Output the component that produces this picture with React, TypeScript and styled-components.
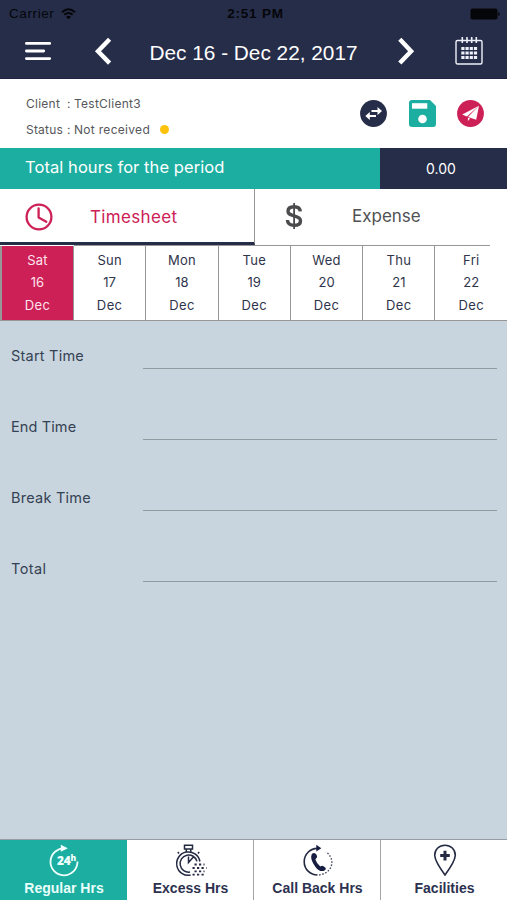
import React from "react";
import styled, { createGlobalStyle } from "styled-components";

const navy = "#262d49";
const teal = "#1caea0";
const crimson = "#cc2056";
const line = "#979797";

const GlobalStyle = createGlobalStyle`
  * { box-sizing: border-box; }
  body { margin: 0; background: #c9d5de; font-family: Inter, "Open Sans", sans-serif; }
  svg { display: block; flex: none; }
`;

const Screen = styled.div`
  width: 507px;
  height: 900px;
  display: flex;
  flex-direction: column;
  overflow: hidden;
  background: #c9d5de;
`;

const Text = styled.span<{ $size: number; $track?: number; $weight?: number; $color?: string; $sans?: boolean }>`
  font-family: ${(p) => (p.$sans ? '"Liberation Sans", sans-serif' : 'Inter, "Open Sans", sans-serif')};
  font-size: ${(p) => p.$size}px;
  letter-spacing: ${(p) => p.$track ?? 0}px;
  font-weight: ${(p) => p.$weight ?? 400};
  color: ${(p) => p.$color ?? "inherit"};
  white-space: pre;
`;

const Header = styled.header`
  height: 79px;
  background: ${navy};
  border-bottom: 1px solid #1e2442;
`;

const StatusBar = styled.div`
  height: 27px;
  display: grid;
  grid-template-columns: 1fr auto 1fr;
  align-items: center;
  padding: 0 5px 0 9px;
  color: #050609;
`;

const Carrier = styled.div`
  display: flex;
  align-items: center;
  gap: 7px;
`;

const Battery = styled.div`
  justify-self: end;
`;

const TitleBar = styled.div`
  height: 48px;
  display: grid;
  grid-template-columns: 76px 54px 247px 58px 68px;
  align-items: center;
  justify-items: center;
  color: #fff;
`;

const Title = styled.div`
  padding-top: 3px;
`;

const ClientPanel = styled.section`
  height: 69px;
  background: #fff;
  display: flex;
  justify-content: space-between;
  padding: 0 23px 0 26px;
  color: #56575c;
`;

const Details = styled.div`
  padding-top: 11px;
`;

const Detail = styled.div`
  display: grid;
  grid-template-columns: 41px 7px auto auto;
  justify-content: start;
  align-items: center;
  height: 26px;
`;

const Dot = styled.i`
  width: 9px;
  height: 9px;
  border-radius: 50%;
  background: #fdc20a;
  margin-left: 10px;
`;

const Actions = styled.div`
  display: flex;
  gap: 21.5px;
  padding-top: 21px;
`;

const TotalBar = styled.section`
  height: 41px;
  display: grid;
  grid-template-columns: 380px 1fr;
  color: #fff;
`;

const TotalLabel = styled.div`
  background: ${teal};
  padding: 0 0 4px 25px;
  display: flex;
  align-items: center;
`;

const TotalValue = styled.div`
  background: ${navy};
  display: flex;
  align-items: center;
  justify-content: center;
  padding: 0 5px 0 0;
`;

const Tabs = styled.nav`
  height: 57px;
  background: #fff;
  display: grid;
  grid-template-columns: 255px 235px;
`;

const Tab = styled.div<{ $active?: boolean }>`
  display: grid;
  grid-template-columns: ${(p) => (p.$active ? "90px auto" : "97px auto")};
  align-items: center;
  justify-content: start;
  padding-top: ${(p) => (p.$active ? 2 : 0)}px;
  padding-bottom: ${(p) => (p.$active ? 0 : 2)}px;
  color: ${(p) => (p.$active ? crimson : "#505154")};
  border-bottom: ${(p) => (p.$active ? `3px solid ${navy}` : `1px solid ${line}`)};
  border-right: ${(p) => (p.$active ? `1px solid ${line}` : "0")};
  height: ${(p) => (p.$active ? 56 : 57)}px;
`;

const TabIcon = styled.div<{ $inset: number }>`
  padding-left: ${(p) => p.$inset}px;
`;

const Days = styled.div`
  height: 75px;
  background: #fff;
  border-bottom: 1px solid ${line};
  display: grid;
  grid-template-columns: 74px repeat(5, 72.3px) 1fr;
`;

const Day = styled.div<{ $active?: boolean }>`
  display: flex;
  flex-direction: column;
  align-items: center;
  padding-top: 3px;
  background: ${(p) => (p.$active ? crimson : "#fff")};
  color: ${(p) => (p.$active ? "#ffe3ee" : "#2f344b")};
  border-right: 1px solid ${line};
  border-left: ${(p) => (p.$active ? `2px solid ${line}` : "0")};
  box-shadow: ${(p) => (p.$active ? "none" : `0 -1px ${line}`)};
  line-height: 22.4px;
  &:last-child { border-right: 0; box-shadow: none; }
`;

const Form = styled.main`
  flex: 1;
  color: #354254;
`;

const Field = styled.label`
  height: 71px;
  display: grid;
  grid-template-columns: 132px 354px;
  padding: 26px 0 0 11px;
`;

const Input = styled.div`
  height: 22px;
  border-bottom: 1px solid #8e9ca0;
`;

const BottomNav = styled.nav`
  height: 61px;
  background: #fff;
  border-top: 1px solid #989da3;
  display: grid;
  grid-template-columns: 127px 127px 127px 126px;
`;

const NavItem = styled.div<{ $active?: boolean }>`
  display: flex;
  flex-direction: column;
  align-items: center;
  justify-content: space-between;
  padding: 4px 0 4px ${(p) => (p.$active ? 2 : 1)}px;
  background: ${(p) => (p.$active ? teal : "#fff")};
  color: ${(p) => (p.$active ? "#e9fffb" : "#2d3150")};
  border-right: 1px solid ${(p) => (p.$active ? teal : "#a4a4a6")};
  &:last-child { border-right: 0; }
`;

const Wifi = () => (
  <svg width="15" height="12" viewBox="0 0 15 12" fill="none" stroke="currentColor" strokeWidth="1.9">
    <path d="M1 4.3Q7.5-1.7 14 4.3M3.3 6.8Q7.5 3 11.7 6.8" />
    <path d="M7.5 11.2 5 8.7q2.5-2 5 0Z" fill="currentColor" stroke="none" />
  </svg>
);

const BatteryIcon = () => (
  <svg width="32" height="12" viewBox="0 0 32 12" fill="currentColor">
    <rect x=".5" y=".5" width="27" height="11" rx="2" />
    <path d="M28.2 4q1.6.5 1.6 2t-1.6 2Z" />
  </svg>
);

const MenuIcon = () => (
  <svg width="28" height="22" viewBox="0 0 28 22" stroke="#fff" strokeWidth="2.8" strokeLinecap="round">
    <path d="M2.4 3.4h23.3M2.4 11h17.3M2.4 18.6h23.3" />
  </svg>
);

const Chevron = ({ right = false }: { right?: boolean }) => (
  <svg width="20" height="28" viewBox="0 0 20 28" fill="none" stroke="#fff" strokeWidth="4.4">
    <path d={right ? "M3.8 2.3 15.1 14.2 3.8 26.1" : "M16.6 2.3 5 14.2 16.6 26.1"} />
  </svg>
);

const CalendarIcon = () => (
  <svg width="28" height="28" viewBox="0 0 28 28" fill="none" stroke="#eef0fa" strokeWidth="1.4">
    <rect x="1" y="3.5" width="26" height="23.5" rx="1.5" />
    <path d="M7.3 0v6M12 0v6M16.7 0v6M21.3 0v6" strokeWidth="1.6" />
    {[11.4, 16, 20.6].map((y) => (
      <path key={y} d={`M6.3 ${y}h3.2m1 0h3.2m1 0h3.2m1 0h3.2`} strokeWidth="3" />
    ))}
  </svg>
);

const SwapIcon = () => (
  <svg width="27" height="27" viewBox="0 0 27 27">
    <circle cx="13.5" cy="13.5" r="13.4" fill={navy} />
    <path d="M11.5 9.9h6V6.9L22 11l-4.5 4v-3h-6ZM16 15v2.1H9.8V20l-4.5-4 4.5-4v3Z" fill="#fff" />
  </svg>
);

const SaveIcon = () => (
  <svg width="27" height="27" viewBox="0 0 27 27">
    <path d="M3 0h18l6 6v18a3 3 0 0 1-3 3H3a3 3 0 0 1-3-3V3a3 3 0 0 1 3-3Z" fill={teal} />
    <path d="M3 3.2h15.3v5.5H3Z" fill="#fff" />
    <circle cx="13.5" cy="19" r="4.3" fill="#fff" />
  </svg>
);

const SendIcon = () => (
  <svg width="27" height="27" viewBox="0 0 27 27">
    <circle cx="13.5" cy="13.5" r="13.4" fill={crimson} />
    <path d="M22 5.7 5.2 14.5l4.7 2.1Z" fill="#fff" />
    <path d="M22 5.7 11 17l8.2 2.8ZM10.9 17.7v3.3l2.2-2.5Z" fill="#fff" />
  </svg>
);

const ClockIcon = () => (
  <svg width="28" height="28" viewBox="0 0 28 28" fill="none" stroke={crimson} strokeWidth="2.3">
    <circle cx="14" cy="14" r="12.4" />
    <path d="M13.6 5.4v9l7.7 4.3" strokeLinecap="round" strokeLinejoin="round" />
  </svg>
);

const DollarIcon = () => (
  <svg width="18" height="28" viewBox="0 0 18 28" fill="none" stroke="#4b4b4d">
    <path d="M9.1 1v26" strokeWidth="1.8" />
    <path d="M15.3 9.4C15 6.2 12.5 4.8 9.2 4.8 5.3 4.8 3 6.5 3 9.2c0 3 2.6 3.7 6.1 4.6 3.9 1 6.4 2 6.4 4.9 0 3-2.5 4.6-6.3 4.6-4 0-6.6-1.8-6.8-5.3" strokeWidth="3.4" />
  </svg>
);

const Hours24Icon = () => (
  <svg width="32" height="33" viewBox="0 0 32 33" fill="none" stroke="#efffff" strokeWidth="1.8">
    <path d="M17.5 4.4A13.5 13.5 0 1 0 29.5 17.6" />
    <path d="m12.8.8 7 3.4-7 3.5Z" fill="#efffff" stroke="none" />
    <text x="9" y="21.4" fontFamily="Open Sans, sans-serif" fontSize="12" fontWeight="800" fill="#efffff" stroke="none" letterSpacing="-.3">24</text>
    <text x="22.6" y="17" fontFamily="Open Sans, sans-serif" fontSize="8.5" fontWeight="800" fill="#efffff" stroke="none">h</text>
  </svg>
);

const StopwatchIcon = () => (
  <svg width="32" height="33" viewBox="0 0 32 33" fill="none" stroke="#252a43" strokeWidth="1.5">
    <path d="M9.5 1.3h8v3.8h-8ZM11.3 5v3.2m4.5-3.2v3.2" />
    <path d="M24.9 17.5a11.7 11.7 0 1 0-9.3 13.6M22 17.4a8.6 8.6 0 1 0-7 10.7M13.5 12.5v6l4.7-5.2" />
    <path d="M4 9.5 2.8 8M23 9.5l1.2-1.5" />
    <path d="M19.5 20.5h10M17.5 24h14M19.5 27.3h10M17.5 30.7h12" strokeWidth="1.8" strokeDasharray="2.2 2.3" />
  </svg>
);

const CallBackIcon = () => (
  <svg width="30" height="33" viewBox="0 0 30 33">
    <path d="M14.5 4.4A13.3 13.3 0 0 0 14.5 31" fill="none" stroke="#252a43" strokeWidth="1.6" />
    <path d="M16 31C32 28.5 31.5 13 23 8" fill="none" stroke="#45485c" strokeWidth="1.4" strokeDasharray="1.6 1.6" />
    <path d="m13.3.8 5 3.4-5 3.3Z" fill="#161d40" />
    <path d="M8.7 10.3q2.5-2.8 4.7.2l.7 2q0 1.7-1.8 2.7 1.4 4.4 5 7.2 1.7-1.3 3.2-.2l2 1.6q1.1 1.7-1.9 3.1-4.4 1.2-8.3-4.2-5.6-7.6-3.6-12.4Z" fill="#161d40" />
  </svg>
);

const PinIcon = () => (
  <svg width="24" height="33" viewBox="0 0 24 33" fill="none" stroke="#252a43">
    <path d="M12 31Q2 17.5 1.7 11.3C1.7 5.4 6.2 1.2 12 1.2s10.3 4.2 10.3 10.1Q22 17.5 12 31Z" strokeWidth="1.6" />
    <path d="M12 6.8v9.6M7.2 11.6h9.6" strokeWidth="3" />
  </svg>
);

const days = [
  ["Sat", "16"], ["Sun", "17"], ["Mon", "18"], ["Tue", "19"], ["Wed", "20"], ["Thu", "21"], ["Fri", "22"],
];

const fields = [
  { name: "Start Time", track: 0.22 },
  { name: "End Time", track: 0.12 },
  { name: "Break Time", track: 0.25 },
  { name: "Total", track: 0.4 },
];

const navItems = [
  { label: "Regular Hrs", Icon: Hours24Icon },
  { label: "Excess Hrs", Icon: StopwatchIcon },
  { label: "Call Back Hrs", Icon: CallBackIcon },
  { label: "Facilities", Icon: PinIcon },
];

export default function App() {
  return (
    <>
      <GlobalStyle />
      <Screen>
        <Header>
          <StatusBar>
            <Carrier>
              <Text $size={13.5} $track={0.6} $sans>Carrier</Text>
              <Wifi />
            </Carrier>
            <Text $size={13.5} $track={0.75} $weight={700} $sans>2:51 PM</Text>
            <Battery><BatteryIcon /></Battery>
          </StatusBar>
          <TitleBar>
            <MenuIcon />
            <Chevron />
            <Title><Text $size={20.8} $sans>Dec 16 - Dec 22, 2017</Text></Title>
            <Chevron right />
            <CalendarIcon />
          </TitleBar>
        </Header>
        <ClientPanel>
          <Details>
            <Detail>
              <Text $size={12} $track={0.25}>Client</Text>
              <Text $size={12}>:</Text>
              <Text $size={12} $track={0.25}>TestClient3</Text>
            </Detail>
            <Detail>
              <Text $size={12} $track={0.2}>Status</Text>
              <Text $size={12}>:</Text>
              <Text $size={12} $track={0.3}>Not received</Text>
              <Dot />
            </Detail>
          </Details>
          <Actions>
            <SwapIcon />
            <SaveIcon />
            <SendIcon />
          </Actions>
        </ClientPanel>
        <TotalBar>
          <TotalLabel><Text $size={16.5} $track={0.07}>Total hours for the period</Text></TotalLabel>
          <TotalValue><Text $size={14}>0.00</Text></TotalValue>
        </TotalBar>
        <Tabs>
          <Tab $active>
            <TabIcon $inset={25}><ClockIcon /></TabIcon>
            <Text $size={17} $track={0.35}>Timesheet</Text>
          </Tab>
          <Tab>
            <TabIcon $inset={30}><DollarIcon /></TabIcon>
            <Text $size={17}>Expense</Text>
          </Tab>
        </Tabs>
        <Days>
          {days.map(([name, date], i) => (
            <Day key={date} $active={i === 0}>
              <Text $size={13} $track={0.25}>{name}</Text>
              <Text $size={13}>{date}</Text>
              <Text $size={13} $track={0.4}>Dec</Text>
            </Day>
          ))}
        </Days>
        <Form>
          {fields.map(({ name, track }) => (
            <Field key={name}>
              <Text $size={14.5} $track={track}>{name}</Text>
              <Input />
            </Field>
          ))}
        </Form>
        <BottomNav>
          {navItems.map(({ label, Icon }, i) => (
            <NavItem key={label} $active={i === 0}>
              <Icon />
              <Text $size={14} $weight={700} $sans>{label}</Text>
            </NavItem>
          ))}
        </BottomNav>
      </Screen>
    </>
  );
}
